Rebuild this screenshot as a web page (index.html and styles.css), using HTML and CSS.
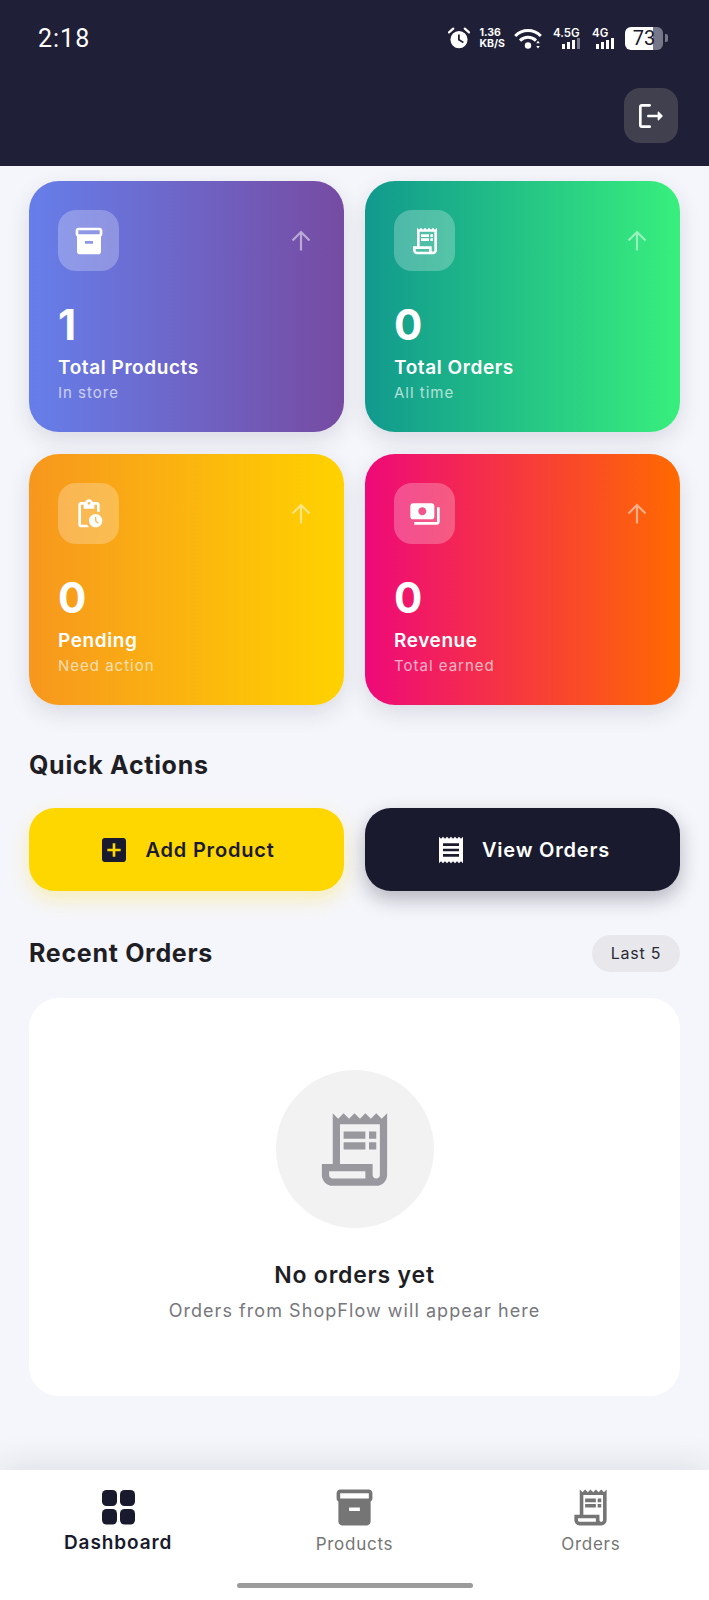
FILE: index.html
```html
<!DOCTYPE html>
<html lang="en">
<head>
  <meta charset="UTF-8">
  <meta name="viewport" content="width=device-width, initial-scale=1.0">
  <title>ShopFlow Dashboard</title>
  <link rel="stylesheet" href="styles.css">
</head>
<body>
  <div class="screen">
    <header class="top">
      <div class="status">
        <span class="time">2:18</span>
        <div class="status-icons">
          <svg class="alarm" viewBox="0 0 22 22"><path d="M11 4a8.600 8.600 0 1 0 0 17.200A8.600 8.600 0 0 0 11 4zm4 12.200-5-3V7.400h1.800v4.900l4 2.400z" fill="#fff"/><path d="M1 5.400 5.200 1.600M21 5.400l-4.200-3.800" stroke="#fff" stroke-width="2.200" stroke-linecap="round"/></svg>
          <div class="speed"><span>1.36</span><span>KB/S</span></div>
          <svg class="wifi" viewBox="0 0 28 21"><path d="M1.200 8C8.500 .8 19.500 .8 26.800 8M6 12.600C10.500 8.200 17.500 8.200 22 12.600" fill="none" stroke="#fff" stroke-width="3"/><circle cx="14" cy="17.500" r="3.200" fill="#fff"/><path d="M24 12.800l1.800 2.400h-3.600zM24 20.500l1.800-2.400h-3.600z" fill="#fff"/></svg>
          <div class="net net-wide">
            <span>4.5G</span>
            <svg class="bars" viewBox="0 0 20 11"><rect x="0" y="6" width="3" height="5" fill="#fff"/><rect x="5" y="4" width="3" height="7" fill="#fff"/><rect x="10" y="2" width="3" height="9" fill="#fff"/><rect x="15" y="0" width="3" height="11" fill="#77778a"/></svg>
          </div>
          <div class="net">
            <span>4G</span>
            <svg class="bars" viewBox="0 0 20 11"><rect x="0" y="6" width="3" height="5" fill="#fff"/><rect x="5" y="4" width="3" height="7" fill="#fff"/><rect x="10" y="2" width="3" height="9" fill="#fff"/><rect x="15" y="0" width="3" height="11" fill="#fff"/></svg>
          </div>
          <div class="battery"><span class="battery-body">73</span><span class="battery-nub"></span></div>
        </div>
      </div>
      <button class="logout" type="button">
        <svg viewBox="0 0 24 24" width="32" height="32" fill="#fff"><path d="M5 5h6c.55 0 1-.45 1-1s-.45-1-1-1H5c-1.100 0-2 .9-2 2v14c0 1.100.9 2 2 2h6c.55 0 1-.45 1-1s-.45-1-1-1H5V5z"/><path d="M20.650 11.650l-2.790-2.790c-.32-.32-.86-.1-.86.35V11h-7c-.55 0-1 .45-1 1s.45 1 1 1h7v1.790c0 .45.54.67.85.35l2.790-2.790c.2-.19.2-.51.01-.7z"/></svg>
      </button>
    </header>

    <main class="content">
      <section class="stats">
        <article class="stat stat-products">
          <div class="stat-top">
            <span class="stat-icon"><svg viewBox="0 0 24 24" width="32" height="32" fill="#fff"><path d="M20 2H4c-1 0-2 .9-2 2v3.010c0 .72.43 1.340 1 1.690V20c0 1.100 1.100 2 2 2h14c.9 0 2-.9 2-2V8.700c.57-.35 1-.97 1-1.690V4c0-1.100-1-2-2-2zm-5 12H9v-2h6v2zm5-7H4V4l16-.02V7z"/></svg></span>
            <svg class="stat-arrow" viewBox="0 0 28 28" width="28" height="28"><path d="M14 23.500V5M5.500 13.500 14 5l8.500 8.500" fill="none" stroke="#fff" stroke-width="2.200"/></svg>
          </div>
          <div class="stat-value">1</div>
          <div class="stat-title">Total Products</div>
          <div class="stat-sub">In store</div>
        </article>
        <article class="stat stat-orders">
          <div class="stat-top">
            <span class="stat-icon"><svg viewBox="0 0 24 24" width="32" height="32" fill="#fff"><path d="M19.500 3.500 18 2l-1.500 1.500L15 2l-1.500 1.500L12 2l-1.500 1.500L9 2 7.500 3.500 6 2v14H3v3c0 1.660 1.340 3 3 3h12c1.660 0 3-1.340 3-3V2l-1.500 1.500zM15 20H6c-.55 0-1-.45-1-1v-1h10v2zm4-1c0 .55-.45 1-1 1s-1-.45-1-1v-3H8V5h11v14z"/><path d="M9 7h6v2H9zM16 7h2v2h-2zM9 10h6v2H9zM16 10h2v2h-2z"/></svg></span>
            <svg class="stat-arrow" viewBox="0 0 28 28" width="28" height="28"><path d="M14 23.500V5M5.500 13.500 14 5l8.500 8.500" fill="none" stroke="#fff" stroke-width="2.200"/></svg>
          </div>
          <div class="stat-value">0</div>
          <div class="stat-title">Total Orders</div>
          <div class="stat-sub">All time</div>
        </article>
        <article class="stat stat-pending">
          <div class="stat-top">
            <span class="stat-icon"><svg viewBox="0 0 24 24" width="32" height="32" fill="#fff"><path d="M17 12c-2.760 0-5 2.240-5 5s2.240 5 5 5 5-2.240 5-5-2.240-5-5-5zm1.650 7.350L16.500 17.200V14h1v2.790l1.850 1.850-.7.71zM18 3h-3.180C14.400 1.840 13.300 1 12 1s-2.400.84-2.820 2H6c-1.100 0-2 .9-2 2v15c0 1.100.9 2 2 2h6.110c-.59-.57-1.070-1.250-1.420-2H6V5h2v3h8V5h2v5.080c.71.1 1.380.31 2 .6V5c0-1.100-.9-2-2-2zm-6 2c-.55 0-1-.45-1-1s.45-1 1-1 1 .45 1 1-.45 1-1 1z"/></svg></span>
            <svg class="stat-arrow" viewBox="0 0 28 28" width="28" height="28"><path d="M14 23.500V5M5.500 13.500 14 5l8.500 8.500" fill="none" stroke="#fff" stroke-width="2.200"/></svg>
          </div>
          <div class="stat-value">0</div>
          <div class="stat-title">Pending</div>
          <div class="stat-sub">Need action</div>
        </article>
        <article class="stat stat-revenue">
          <div class="stat-top">
            <span class="stat-icon"><svg viewBox="0 0 24 24" width="32" height="32" fill="#fff"><path d="M19 14V6c0-1.100-.9-2-2-2H3c-1.100 0-2 .9-2 2v8c0 1.100.9 2 2 2h14c1.100 0 2-.9 2-2zm-9-1c-1.660 0-3-1.340-3-3s1.340-3 3-3 3 1.340 3 3-1.340 3-3 3zm13-6v11c0 1.100-.9 2-2 2H4v-2h17V7h2z"/></svg></span>
            <svg class="stat-arrow" viewBox="0 0 28 28" width="28" height="28"><path d="M14 23.500V5M5.500 13.500 14 5l8.500 8.500" fill="none" stroke="#fff" stroke-width="2.200"/></svg>
          </div>
          <div class="stat-value">0</div>
          <div class="stat-title">Revenue</div>
          <div class="stat-sub">Total earned</div>
        </article>
      </section>

      <h2 class="section-title quick-title">Quick Actions</h2>
      <section class="actions">
        <button class="action action-add" type="button">
          <svg viewBox="0 0 24 24" width="32" height="32" fill="#1a1a2e"><path d="M19 3H5c-1.110 0-2 .9-2 2v14c0 1.100.89 2 2 2h14c1.100 0 2-.9 2-2V5c0-1.100-.9-2-2-2zm-2 10h-4v4h-2v-4H7v-2h4V7h2v4h4v2z"/></svg>
          <span>Add Product</span>
        </button>
        <button class="action action-view" type="button">
          <svg viewBox="0 0 24 24" width="32" height="32" fill="#fff"><path d="M18 17H6v-2h12v2zm0-4H6v-2h12v2zm0-4H6V7h12v2zM3 22l1.500-1.500L6 22l1.500-1.500L9 22l1.500-1.500L12 22l1.500-1.500L15 22l1.500-1.500L18 22l1.500-1.500L21 22V2l-1.500 1.500L18 2l-1.500 1.500L15 2l-1.500 1.500L12 2l-1.500 1.500L9 2 7.500 3.500 6 2 4.500 3.500 3 2v20z"/></svg>
          <span>View Orders</span>
        </button>
      </section>

      <div class="recent-head">
        <h2 class="section-title recent-title">Recent Orders</h2>
        <span class="badge">Last 5</span>
      </div>
      <section class="empty">
        <div class="empty-circle">
          <svg viewBox="0 0 24 24" width="87" height="87" fill="#98989e"><path d="M19.500 3.500 18 2l-1.500 1.500L15 2l-1.500 1.500L12 2l-1.500 1.500L9 2 7.500 3.500 6 2v14H3v3c0 1.660 1.340 3 3 3h12c1.660 0 3-1.340 3-3V2l-1.500 1.500zM15 20H6c-.55 0-1-.45-1-1v-1h10v2zm4-1c0 .55-.45 1-1 1s-1-.45-1-1v-3H8V5h11v14z"/><path d="M9 7h6v2H9zM16 7h2v2h-2zM9 10h6v2H9zM16 10h2v2h-2z"/></svg>
        </div>
        <h3 class="empty-title">No orders yet</h3>
        <p class="empty-sub">Orders from ShopFlow will appear here</p>
      </section>
    </main>

    <nav class="tabs">
      <div class="tab-row">
        <a class="tab tab-active">
          <svg viewBox="0 0 43 43" width="43" height="43" fill="#1a1a2e"><rect x="5" y="4" width="15" height="16" rx="4.500"/><rect x="23" y="4" width="15" height="16" rx="4.500"/><rect x="5" y="23" width="15" height="15.500" rx="4.500"/><rect x="23" y="23" width="15" height="15.500" rx="4.500"/></svg>
          <span>Dashboard</span>
        </a>
        <a class="tab">
          <svg viewBox="0 0 24 24" width="43" height="43" fill="#757575"><path d="M20 2H4c-1 0-2 .9-2 2v3.010c0 .72.43 1.340 1 1.690V20c0 1.100 1.100 2 2 2h14c.9 0 2-.9 2-2V8.700c.57-.35 1-.97 1-1.690V4c0-1.100-1-2-2-2zm-5 12H9v-2h6v2zm5-7H4V4l16-.02V7z"/></svg>
          <span>Products</span>
        </a>
        <a class="tab">
          <svg viewBox="0 0 24 24" width="43" height="43" fill="#757575"><path d="M19.500 3.500 18 2l-1.500 1.500L15 2l-1.500 1.500L12 2l-1.500 1.500L9 2 7.500 3.500 6 2v14H3v3c0 1.660 1.340 3 3 3h12c1.660 0 3-1.340 3-3V2l-1.500 1.500zM15 20H6c-.55 0-1-.45-1-1v-1h10v2zm4-1c0 .55-.45 1-1 1s-1-.45-1-1v-3H8V5h11v14z"/><path d="M9 7h6v2H9zM16 7h2v2h-2zM9 10h6v2H9zM16 10h2v2h-2z"/></svg>
          <span>Orders</span>
        </a>
      </div>
      <div class="home-bar"></div>
    </nav>
  </div>
</body>
</html>
```

FILE: styles.css
```css
* {
  box-sizing: border-box;
}
body {
  margin: 0;
  font-family: Inter, "Open Sans", sans-serif;
  background-color: #f5f6fb;
  color: #1a1a2e;
}
.screen {
  height: 1600px;
  display: flex;
  flex-direction: column;
  overflow: hidden;
}

/* top bar */
.top {
  height: 166px;
  padding: 20px 31px 0 38px;
  background-color: #1f2037;
  flex-shrink: 0;
}
.status {
  display: flex;
  align-items: center;
  justify-content: space-between;
  height: 36px;
  padding-right: 10px;
}
.time {
  font-family: Roboto, sans-serif;
  font-size: 25px;
  color: #fff;
  letter-spacing: 1px;
}
.status-icons {
  display: flex;
  align-items: center;
  color: #fff;
}
.alarm {
  width: 22px;
  height: 22px;
}
.speed {
  display: flex;
  flex-direction: column;
  margin-left: 10px;
  font-size: 10.500px;
  line-height: 11px;
  font-weight: 700;
}
.wifi {
  width: 28px;
  height: 21px;
  margin-left: 9px;
}
.net {
  display: flex;
  flex-direction: column;
  width: 24px;
  margin-left: 10px;
  font-size: 11.500px;
  line-height: 12px;
  font-weight: 600;
}
.net-wide {
  width: 29px;
  margin-left: 11px;
}
.bars {
  width: 20px;
  height: 11px;
  margin-top: -1px;
  align-self: flex-end;
}
.battery {
  display: flex;
  align-items: center;
  margin-left: 9px;
}
.battery-body {
  width: 38px;
  height: 23px;
  border-radius: 6px;
  background: linear-gradient(90deg, #fff 74%, #77778a 74%);
  color: #1a1a2e;
  font-family: Roboto, sans-serif;
  font-size: 20px;
  line-height: 23px;
  text-align: center;
}
.battery-nub {
  width: 3px;
  height: 8px;
  margin-left: 2px;
  border-radius: 0 2px 2px 0;
  background-color: #77778a;
}
.logout {
  display: flex;
  align-items: center;
  justify-content: center;
  width: 54px;
  height: 55px;
  margin: 32px 0 0 auto;
  padding: 0;
  border: none;
  border-radius: 16px;
  background-color: #40404f;
}

/* main area */
.content {
  flex: 1;
  padding: 15px 29px 0;
}
.stats {
  display: grid;
  grid-template-columns: 1fr 1fr;
  gap: 22px 21px;
}
.stat {
  height: 251px;
  padding: 29px 29px 0;
  border-radius: 30px;
  color: #fff;
  box-shadow: 0 8px 22px rgba(30, 30, 60, 0.12);
}
.stat-products {
  background: linear-gradient(90deg, #667eea, #764ba2);
}
.stat-orders {
  background: linear-gradient(90deg, #11998e, #38ef7d);
}
.stat-pending {
  background: linear-gradient(90deg, #f7971e, #ffd200);
}
.stat-revenue {
  background: linear-gradient(90deg, #ee0979, #ff6a00);
}
.stat-top {
  display: flex;
  align-items: center;
  justify-content: space-between;
}
.stat-icon {
  display: flex;
  align-items: center;
  justify-content: center;
  width: 61px;
  height: 61px;
  border-radius: 18px;
  background-color: rgba(255, 255, 255, 0.25);
}
.stat-arrow {
  opacity: 0.5;
}
.stat-value {
  margin-top: 32px;
  font-size: 42px;
  line-height: 44px;
  font-weight: 700;
}
.stat-title {
  margin-top: 8px;
  font-size: 19px;
  line-height: 26px;
  font-weight: 600;
  letter-spacing: 0.58px;
}
.stat-sub {
  margin-top: 1px;
  font-size: 15px;
  line-height: 22px;
  letter-spacing: 1px;
  opacity: 0.65;
}

/* quick actions */
.section-title {
  margin: 0;
  font-size: 25px;
  line-height: 32px;
  font-weight: 700;
  letter-spacing: 0.7px;
  color: #1e1e24;
}
.quick-title {
  margin: 44px 0 27px;
}
.actions {
  display: grid;
  grid-template-columns: 1fr 1fr;
  gap: 21px;
}
.action {
  display: flex;
  align-items: center;
  justify-content: center;
  gap: 15px;
  height: 83px;
  border: none;
  border-radius: 26px;
  font-family: inherit;
  font-size: 20px;
  font-weight: 600;
  letter-spacing: 0.8px;
}
.action-add {
  background-color: #ffd700;
  color: #1a1a2e;
  box-shadow: 0 8px 20px rgba(255, 215, 0, 0.28);
}
.action-view {
  background-color: #1a1a2e;
  color: #fff;
  box-shadow: 0 8px 20px rgba(26, 26, 46, 0.3);
}

/* recent orders */
.recent-head {
  display: flex;
  align-items: center;
  justify-content: space-between;
  margin: 44px 0 26px;
}
.recent-title {
  padding-bottom: 2px;
}
.badge {
  width: 88px;
  height: 37px;
  border-radius: 19px;
  background-color: #e8e8ec;
  font-size: 16px;
  line-height: 37px;
  letter-spacing: 0.8px;
  text-align: center;
  color: #2a2a33;
}
.empty {
  display: flex;
  flex-direction: column;
  align-items: center;
  height: 398px;
  padding-top: 72px;
  border-radius: 30px;
  background-color: #fff;
}
.empty-circle {
  display: flex;
  align-items: center;
  justify-content: center;
  width: 158px;
  height: 158px;
  border-radius: 50%;
  background-color: #f2f2f3;
}
.empty-title {
  margin: 31px 0 0;
  font-size: 23px;
  line-height: 32px;
  font-weight: 600;
  letter-spacing: 0.8px;
  color: #1e1e24;
}
.empty-sub {
  margin: 6px 0 0;
  font-size: 18px;
  line-height: 28px;
  letter-spacing: 1.05px;
  color: #77777d;
}

/* bottom navigation */
.tabs {
  height: 130px;
  flex-shrink: 0;
  background-color: #fff;
  box-shadow: 0 -8px 30px rgba(30, 30, 60, 0.09);
}
.tab-row {
  display: flex;
  justify-content: space-around;
  padding-top: 16px;
}
.tab {
  display: flex;
  flex-direction: column;
  align-items: center;
  width: 236px;
  font-size: 17px;
  line-height: 24px;
  letter-spacing: 0.75px;
  color: #757575;
}
.tab span {
  margin-top: 3px;
}
.tab-active {
  color: #1a1a2e;
  font-size: 19px;
  font-weight: 600;
  letter-spacing: 0.9px;
}
.tab-active span {
  margin-top: 2px;
}
.home-bar {
  width: 236px;
  height: 5px;
  margin: 27px auto 0;
  border-radius: 3px;
  background-color: #9b9b9b;
}
```
